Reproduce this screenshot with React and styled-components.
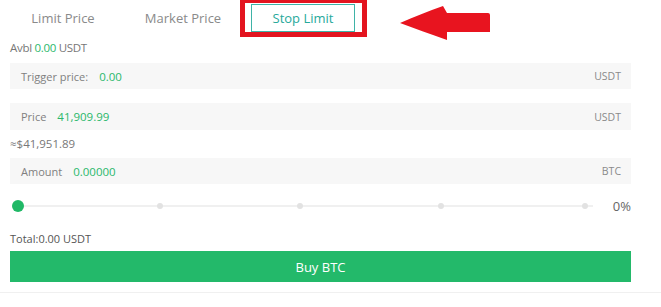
import React from "react";
import styled, { createGlobalStyle } from "styled-components";

const Global = createGlobalStyle`
  body {
    margin: 0;
    background: #fff;
    font-family: "Open Sans", "Noto Sans", sans-serif;
  }
`;

const Page = styled.div`
  position: relative;
  width: 661px;
  height: 307px;
  overflow: hidden;
`;

const Panel = styled.div`
  width: 621px;
  padding: 0 30px 10px 10px;
  border-bottom: 1px solid #f0f0f0;
`;

const Tabs = styled.div`
  display: flex;
  gap: 16px;
  padding: 4px 0 0 1px;
  height: 33px;
  box-sizing: border-box;
`;

const Tab = styled.div`
  width: 104px;
  height: 28px;
  box-sizing: border-box;
  display: flex;
  align-items: center;
  justify-content: center;
  font-size: 13px;
  color: ${(p) => (p.$active ? "#27a99b" : "#8a8a8a")};
  border: 1px solid ${(p) => (p.$active ? "#3fb3a7" : "transparent")};
`;

const Avbl = styled.div`
  margin-top: 7px;
  font-size: 11.5px;
  color: #777;
  letter-spacing: -0.3px;
  line-height: 16px;
`;

const Green = styled.span`
  color: #2ab86b;
`;

const Field = styled.div`
  display: flex;
  align-items: center;
  height: ${(p) => p.$h || 26}px;
  margin-top: ${(p) => p.$mt}px;
  padding: 0 10px 0 11px;
  background: #f7f7f7;
  font-size: 11px;
  color: #808080;
`;

const Label = styled.span`
  margin-right: ${(p) => p.$gap}px;
`;

const Value = styled.span`
  color: #2ab86b;
  font-size: 11.5px;
  flex: 1;
`;

const Unit = styled.span`
  font-size: 10.5px;
  color: #8a8a8a;
`;

const Approx = styled.div`
  margin-top: 5px;
  font-size: 11.5px;
  color: #777;
  line-height: 18px;
`;

const SliderRow = styled.div`
  display: flex;
  align-items: center;
  margin-top: 15px;
  height: 14px;
`;

const Track = styled.div`
  position: relative;
  flex: 1;
  height: 14px;
  margin-left: 2px;
  margin-right: 20px;
`;

const Line = styled.div`
  position: absolute;
  left: 6px;
  right: 0;
  top: 6px;
  height: 2px;
  background: #f0f0f0;
`;

const Knob = styled.div`
  position: absolute;
  left: 0;
  top: 1px;
  width: 12px;
  height: 12px;
  border-radius: 50%;
  background: #20b866;
`;

const Tick = styled.div`
  position: absolute;
  top: 4px;
  width: 6px;
  height: 6px;
  margin-left: -3px;
  border-radius: 50%;
  background: #e2e2e2;
`;

const Pct = styled.span`
  font-size: 13px;
  color: #666;
`;

const Total = styled.div`
  margin-top: 19px;
  font-size: 11px;
  color: #555;
  line-height: 14px;
`;

const BuyButton = styled.button`
  display: block;
  width: 621px;
  height: 31px;
  margin-top: 5px;
  border: none;
  background: #23b96a;
  color: #fff;
  font-family: inherit;
  font-size: 13px;
`;

const Highlight = styled.div`
  position: absolute;
  left: 240px;
  top: -2px;
  width: 127px;
  height: 39px;
  box-sizing: border-box;
  border: 5px solid #e3141f;
  pointer-events: none;
`;

const Arrow = styled.svg`
  position: absolute;
  left: 400px;
  top: 5px;
`;

export default function App() {
  const ticks = [148, 288, 429, 573];
  return (
    <Page>
      <Global />
      <Panel>
        <Tabs>
          <Tab>Limit Price</Tab>
          <Tab>Market Price</Tab>
          <Tab $active>Stop Limit</Tab>
        </Tabs>
        <Avbl>
          Avbl <Green>0.00</Green> USDT
        </Avbl>
        <Field $mt={7}>
          <Label $gap={11}>Trigger price:</Label>
          <Value>0.00</Value>
          <Unit>USDT</Unit>
        </Field>
        <Field $mt={14} $h={27}>
          <Label $gap={11}>Price</Label>
          <Value>41,909.99</Value>
          <Unit>USDT</Unit>
        </Field>
        <Approx>≈$41,951.89</Approx>
        <Field $mt={5}>
          <Label $gap={11}>Amount</Label>
          <Value>0.00000</Value>
          <Unit>BTC</Unit>
        </Field>
        <SliderRow>
          <Track>
            <Line />
            {ticks.map((t) => (
              <Tick key={t} style={{ left: t }} />
            ))}
            <Knob />
          </Track>
          <Pct>0%</Pct>
        </SliderRow>
        <Total>Total:0.00 USDT</Total>
        <BuyButton>Buy BTC</BuyButton>
      </Panel>
      <Highlight />
      <Arrow width="92" height="37" viewBox="0 0 92 37">
        <path
          d="M0 18 C14 12 28 6 43 1 L47 8 L88 8 Q90 8 90 10 L90 27 L47 27 L47 35 C30 29 14 23 0 18 Z"
          fill="#e8141f"
        />
      </Arrow>
    </Page>
  );
}
